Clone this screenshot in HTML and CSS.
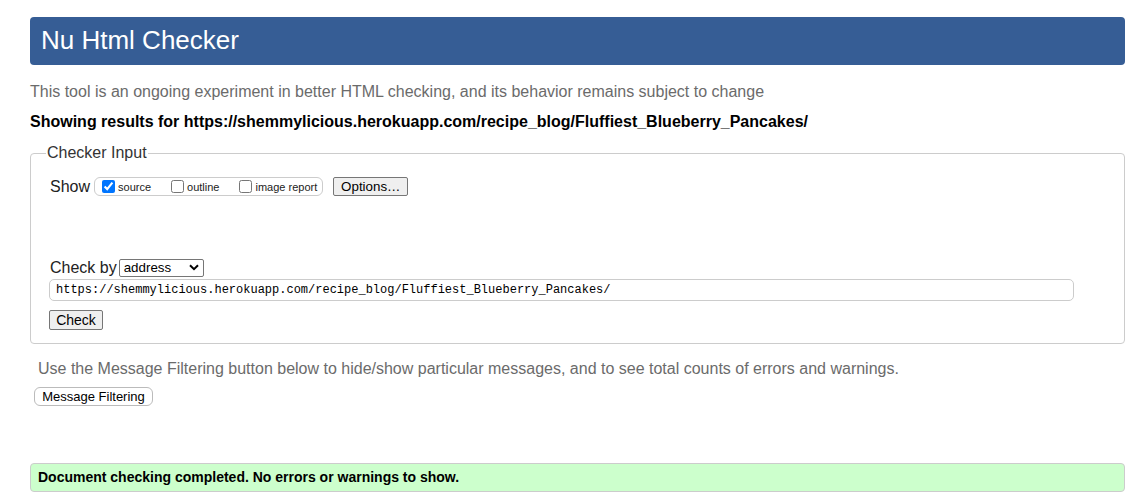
FILE: index.html
```html
<!DOCTYPE html>
<html lang="en">
<head>
<meta charset="utf-8">
<title>Showing results for https://shemmylicious.herokuapp.com/recipe_blog/Fluffiest_Blueberry_Pancakes/ - Nu Html Checker</title>
<link rel="stylesheet" href="styles.css">
</head>
<body>
<h1 class="banner">Nu Html Checker</h1>
<p class="intro">This tool is an ongoing experiment in better HTML checking, and its behavior remains subject to change</p>
<p class="results-for">Showing results for https://shemmylicious.herokuapp.com/recipe_blog/Fluffiest_Blueberry_Pancakes/</p>
<form class="checker">
  <fieldset class="checker-set">
    <legend class="checker-legend">Checker Input</legend>
    <div class="show-row">
      <span class="row-label">Show</span>
      <span class="show-group">
        <label class="opt"><input type="checkbox" class="cb" checked>source</label>
        <label class="opt"><input type="checkbox" class="cb">outline</label>
        <label class="opt"><input type="checkbox" class="cb">image report</label>
      </span>
      <button type="button" class="btn btn-options">Options…</button>
    </div>
    <div class="checkby-row">
      <span class="row-label">Check by</span>
      <span class="select">address<svg class="chev" width="10" height="7" viewBox="0 0 10 7"><path d="M1 1.2 L5 5.2 L9 1.2" fill="none" stroke="#000" stroke-width="2"/></svg></span>
    </div>
    <div class="url-field">https://shemmylicious.herokuapp.com/recipe_blog/Fluffiest_Blueberry_Pancakes/</div>
    <div class="check-row"><button type="button" class="btn btn-check">Check</button></div>
  </fieldset>
</form>
<p class="filter-note">Use the Message Filtering button below to hide/show particular messages, and to see total counts of errors and warnings.</p>
<div class="filter-row"><button type="button" class="btn-filter">Message Filtering</button></div>
<p class="success">Document checking completed. No errors or warnings to show.</p>
</body>
</html>
```

FILE: styles.css
```css
html, body {
  background: #fff;
}
body {
  margin: 0;
  padding: 17px 23px 0 30px;
  font-family: "Liberation Sans", Arial, sans-serif;
  color: #222;
}
.banner {
  margin: 0;
  height: 48px;
  line-height: 47px;
  padding-left: 11px;
  background: #365d95;
  color: #fff;
  font-size: 26px;
  font-weight: normal;
  border-radius: 4px;
}
.intro {
  margin: 18px 0 0;
  font-size: 16px;
  line-height: 18px;
  color: #6b6b6b;
}
.results-for {
  margin: 12px 0 0;
  font-size: 16px;
  line-height: 18px;
  font-weight: bold;
  color: #000;
}
.checker {
  margin: 13px 0 0;
}
.checker-set {
  margin: 0;
  padding: 0 18px 13px 18px;
  border: 1px solid #ccc;
  border-radius: 4px;
  min-width: 0;
}
.checker-legend {
  padding: 0 1px;
  margin-left: -3px;
  font-size: 16px;
  line-height: 18px;
  color: #333;
}
.show-row {
  display: flex;
  align-items: center;
  margin-top: 15px;
  padding-left: 1px;
  height: 19px;
}
.row-label {
  font-size: 16px;
  color: #222;
}
.show-group {
  display: inline-flex;
  align-items: center;
  margin-left: 4px;
  height: 17px;
  padding: 0 5px 0 6px;
  border: 1px solid #ccc;
  border-radius: 6px;
  gap: 0;
}
.opt {
  display: inline-flex;
  align-items: center;
  font-size: 11px;
  color: #222;
}
.opt + .opt {
  margin-left: 19px;
}
.cb {
  margin: 0 3px 0 1px;
  width: 13px;
  height: 13px;
}
.btn {
  font-family: "Liberation Sans", Arial, sans-serif;
  font-size: 13.33px;
  color: #000;
  background: #efefef;
  border: 1px solid #767676;
  border-radius: 2px;
  padding: 0 6px;
  height: 19px;
  line-height: 17px;
}
.btn-options {
  margin-left: 10px;
  width: 75px;
}
.checkby-row {
  display: flex;
  align-items: center;
  margin-top: 62px;
  padding-left: 1px;
  height: 19px;
}
.select {
  display: inline-flex;
  align-items: center;
  justify-content: space-between;
  box-sizing: border-box;
  margin-left: 2px;
  width: 85px;
  height: 18px;
  padding: 0 4px 0 4px;
  border: 1px solid #767676;
  border-radius: 2px;
  font-size: 13.33px;
  color: #000;
}
.chev {
  display: block;
}
.url-field {
  box-sizing: border-box;
  margin: 2px 0 0 0;
  width: 1025px;
  height: 22px;
  line-height: 20px;
  padding: 0 6px;
  border: 1px solid #ccc;
  border-radius: 5px;
  font-family: "Liberation Mono", "DejaVu Sans Mono", monospace;
  font-size: 12px;
  color: #000;
}
.check-row {
  margin: 9px 0 0 0;
}
.btn-check {
  width: 54px;
  height: 20px;
  font-size: 14px;
}
.filter-note {
  margin: 16px 0 0 8px;
  font-size: 16px;
  line-height: 18px;
  color: #6b6b6b;
}
.filter-row {
  margin: 9px 0 0 4px;
}
.btn-filter {
  font-family: "Liberation Sans", Arial, sans-serif;
  font-size: 13px;
  color: #000;
  background: #fff;
  border: 1px solid #bbb;
  border-radius: 6px;
  height: 19px;
  width: 119px;
  padding: 0;
  line-height: 17px;
}
.success {
  margin: 57px 0 0;
  height: 29px;
  line-height: 27px;
  box-sizing: border-box;
  padding-left: 7px;
  background: #ccffcc;
  border: 1px solid #ccc;
  border-radius: 4px;
  font-size: 14px;
  font-weight: bold;
  color: #000;
}
```
